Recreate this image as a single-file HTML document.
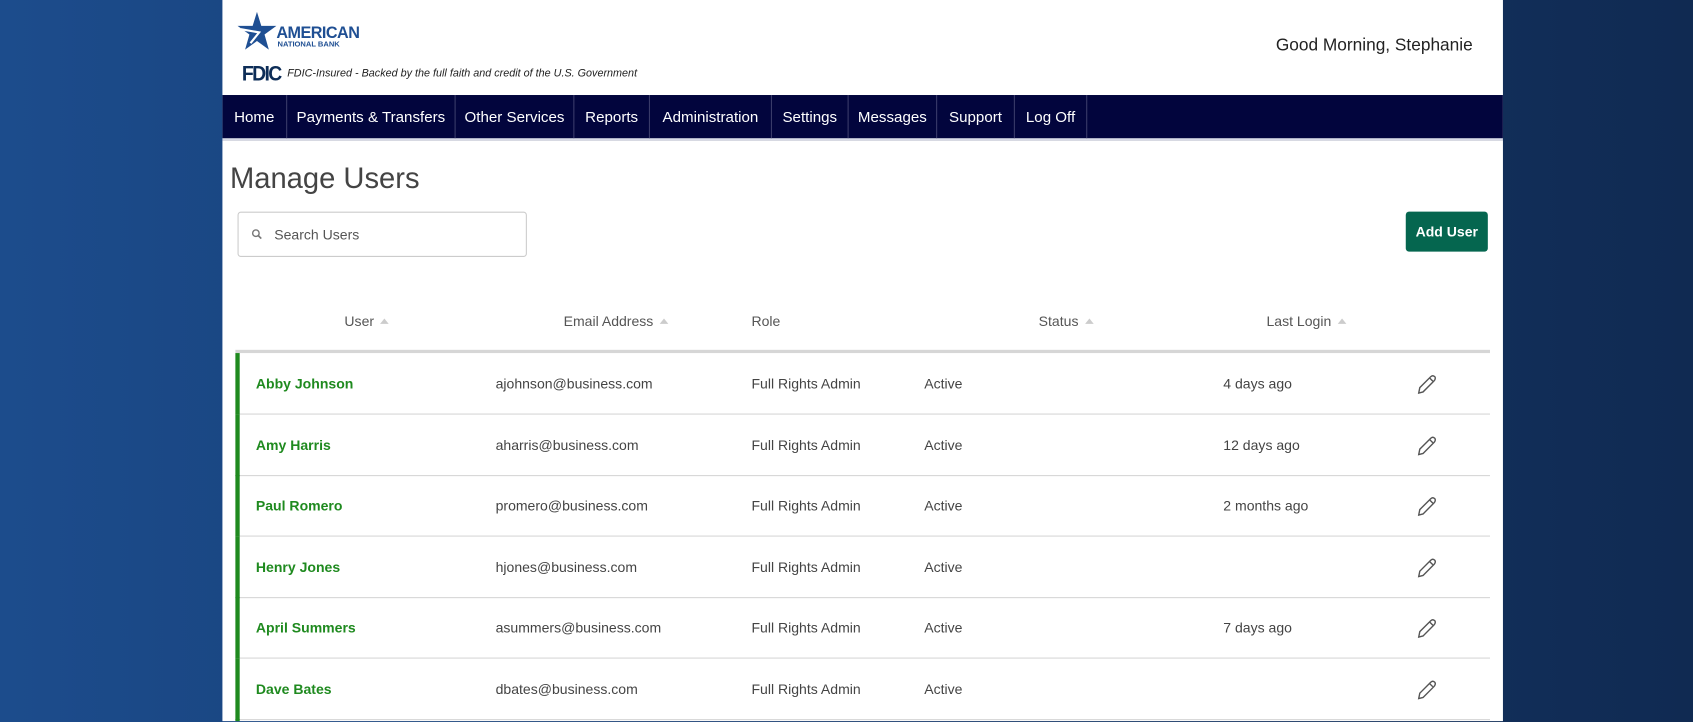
<!DOCTYPE html>
<html><head><meta charset="utf-8"><style>
*{box-sizing:border-box;margin:0;padding:0}
html,body{width:1693px;height:722px;overflow:hidden}
body{background:linear-gradient(90deg,#1c4c8c 0%,#163a6e 50%,#102a52 100%);font-family:"Liberation Sans",sans-serif;position:relative}
#s{position:absolute;left:0;top:0;width:1568px;height:668px;transform:scale(1.0797);transform-origin:0 0;overflow:hidden}
#c{position:absolute;left:206px;top:0;width:1186px;height:668px;background:#fff;overflow:hidden}
.abs{position:absolute}
.nav{position:absolute;left:0;top:88px;width:1186px;height:42px;background:#02053d;border-bottom:2px solid #d8dbe6}
.nav div{position:absolute;top:0;height:40px;line-height:40px;color:#fff;font-size:14px;text-align:center;border-right:1px solid #3a3c6a}
.th{position:absolute;top:290px;font-size:13px;color:#555}
.tri{display:inline-block;width:0;height:0;border-left:4px solid transparent;border-right:4px solid transparent;border-bottom:5px solid #ccc;margin-left:6px;vertical-align:2px}
.row{position:absolute;left:12px;width:1162px;height:57px;border-bottom:1px solid #d6d6d6}
.row .bar{position:absolute;left:0;top:0;width:4px;height:57px;background:#1f8a1f}
.row span{position:absolute;top:21px;font-size:13px;color:#444}
.row .n{color:#1f8a1f;font-weight:bold;left:19px}
</style></head><body><div id="s"><div id="c">
<svg class="abs" style="left:14px;top:10px" width="36" height="38" viewBox="0 0 36 38"><polygon points="18,1 22,14 36,14 25,22 29,36 18,28 7,36 11,22 0,14 14,14" fill="#1f4f93"/><path d="M3 17 L20 20 L12 30" stroke="#fff" stroke-width="2" fill="none"/></svg>
<div class="abs" style="left:50px;top:22px;color:#1f4f93;font-weight:bold;font-size:15px;letter-spacing:-0.5px">AMERICAN</div>
<div class="abs" style="left:51px;top:38px;color:#1f4f93;font-weight:bold;font-size:7px">NATIONAL BANK</div>
<div class="abs" style="left:18px;top:58px;color:#0d2d57;font-weight:bold;font-size:18px;letter-spacing:-1.5px;transform:scaleY(1.1)">FDIC</div>
<div class="abs" style="left:60px;top:63px;color:#222;font-style:italic;font-size:10px">FDIC-Insured - Backed by the full faith and credit of the U.S. Government</div>
<div class="abs" style="right:28px;top:34px;color:#222;font-size:16px">Good Morning, Stephanie</div>
<div class="nav">
<div style="left:0;width:60px">Home</div><div style="left:60px;width:156px">Payments &amp; Transfers</div><div style="left:216px;width:110px">Other Services</div><div style="left:326px;width:70px">Reports</div><div style="left:396px;width:113px">Administration</div><div style="left:509px;width:71px">Settings</div><div style="left:580px;width:82px">Messages</div><div style="left:662px;width:72px">Support</div><div style="left:734px;width:67px">Log Off</div>
</div>
<div class="abs" style="left:7px;top:150px;font-size:27px;color:#444">Manage Users</div>
<div class="abs" style="left:14px;top:196px;width:268px;height:42px;border:1px solid #ccc;border-radius:3px">
<svg class="abs" style="left:12px;top:15px" width="10" height="10" viewBox="0 0 10 10"><circle cx="4" cy="4" r="3" stroke="#777" stroke-width="1.3" fill="none"/><line x1="6" y1="6" x2="9" y2="9" stroke="#777" stroke-width="1.5"/></svg>
<span class="abs" style="left:33px;top:13px;font-size:13px;color:#555">Search Users</span></div>
<div class="abs" style="left:1096px;top:196px;width:76px;height:37px;background:#05664f;border-radius:3px;color:#fff;font-weight:bold;font-size:13px;line-height:37px;text-align:center">Add User</div>
<div class="th" style="left:113px">User<i class="tri"></i></div>
<div class="th" style="left:316px">Email Address<i class="tri"></i></div>
<div class="th" style="left:490px">Role</div>
<div class="th" style="left:756px">Status<i class="tri"></i></div>
<div class="th" style="left:967px">Last Login<i class="tri"></i></div>
<div class="abs" style="left:12px;top:324px;width:1162px;height:3px;background:#d6d6d6"></div>
<div id="rows"></div>
</div></div>
<script>
var d=[["Abby Johnson","ajohnson","4 days ago"],["Amy Harris","aharris","12 days ago"],["Paul Romero","promero","2 months ago"],["Henry Jones","hjones",""],["April Summers","asummers","7 days ago"],["Dave Bates","dbates",""]];
var h="";d.forEach(function(r,i){var t=327+i*56.5;h+='<div class="row" style="top:'+t+'px"><div class="bar"></div><span class="n">'+r[0]+'</span><span style="left:241px">'+r[1]+'@business.com</span><span style="left:478px">Full Rights Admin</span><span style="left:638px">Active</span><span style="left:915px">'+r[2]+'</span><svg style="position:absolute;left:1092px;top:18px" width="22" height="22" viewBox="0 0 22 22"><path d="M4 19 L5 14 L15 4 Q17 2 19 4 Q20 6 18 8 L8 18 Z M14 5 L17 8" stroke="#555" stroke-width="1.3" fill="none"/></svg></div>'});
h+='<div class="abs" style="left:12px;top:666px;width:4px;height:10px;background:#1f8a1f"></div>';
document.getElementById("rows").innerHTML=h;
</script>
</body></html>
